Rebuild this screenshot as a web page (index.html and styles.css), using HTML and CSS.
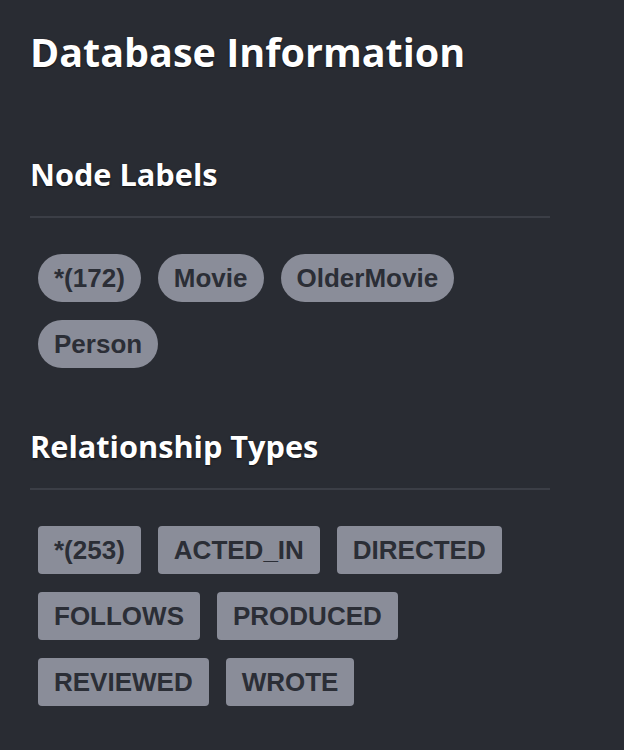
FILE: index.html
```html
<!DOCTYPE html>
<html lang="en">
<head>
<meta charset="utf-8">
<title>Database Information</title>
<link rel="stylesheet" href="styles.css">
</head>
<body>
<div class="panel">
  <h1 class="title">Database Information</h1>
  <section class="section section-first">
    <h2 class="section-title">Node Labels</h2>
    <div class="chips">
      <span class="chip chip-label">*(172)</span>
      <span class="chip chip-label">Movie</span>
      <span class="chip chip-label">OlderMovie</span>
      <span class="chip chip-label">Person</span>
    </div>
  </section>
  <section class="section">
    <h2 class="section-title">Relationship Types</h2>
    <div class="chips">
      <span class="chip chip-rel">*(253)</span>
      <span class="chip chip-rel">ACTED_IN</span>
      <span class="chip chip-rel">DIRECTED</span>
      <span class="chip chip-rel">FOLLOWS</span>
      <span class="chip chip-rel">PRODUCED</span>
      <span class="chip chip-rel">REVIEWED</span>
      <span class="chip chip-rel">WROTE</span>
    </div>
  </section>
</div>
</body>
</html>
```
FILE: styles.css
```css
html, body {
  margin: 0;
  padding: 0;
  background: #292c33;
}
body {
  min-height: 750px;
}
.panel {
  width: 520px;
  padding: 28px 0 0 30px;
}
.title {
  margin: 0;
  font-family: "Open Sans", "DejaVu Sans", sans-serif;
  font-weight: 700;
  font-size: 39.5px;
  line-height: 48px;
  color: #ffffff;
  text-shadow: 0 1px 2px rgba(0, 0, 0, 0.6);
}
.section {
  margin-top: 60px;
}
.section-first {
  margin-top: 80px;
}
.section-title {
  margin: 0;
  padding-bottom: 24px;
  border-bottom: 2px solid #3b3e46;
  font-family: "Open Sans", "DejaVu Sans", sans-serif;
  font-weight: 700;
  font-size: 30.7px;
  line-height: 36px;
  color: #ffffff;
  text-shadow: 0 1px 2px rgba(0, 0, 0, 0.6);
}
.chips {
  display: flex;
  flex-wrap: wrap;
  gap: 18px 17px;
  margin-top: 36px;
  padding-left: 8px;
}
.chip {
  display: block;
  height: 48px;
  line-height: 48px;
  padding: 0 16px;
  background: #8a8d99;
  color: #2b2e36;
  font-family: "Liberation Sans", Arial, sans-serif;
  font-weight: 700;
  font-size: 26px;
  white-space: nowrap;
}
.chip-label {
  border-radius: 24px;
}
.chip-rel {
  border-radius: 4px;
}
```
